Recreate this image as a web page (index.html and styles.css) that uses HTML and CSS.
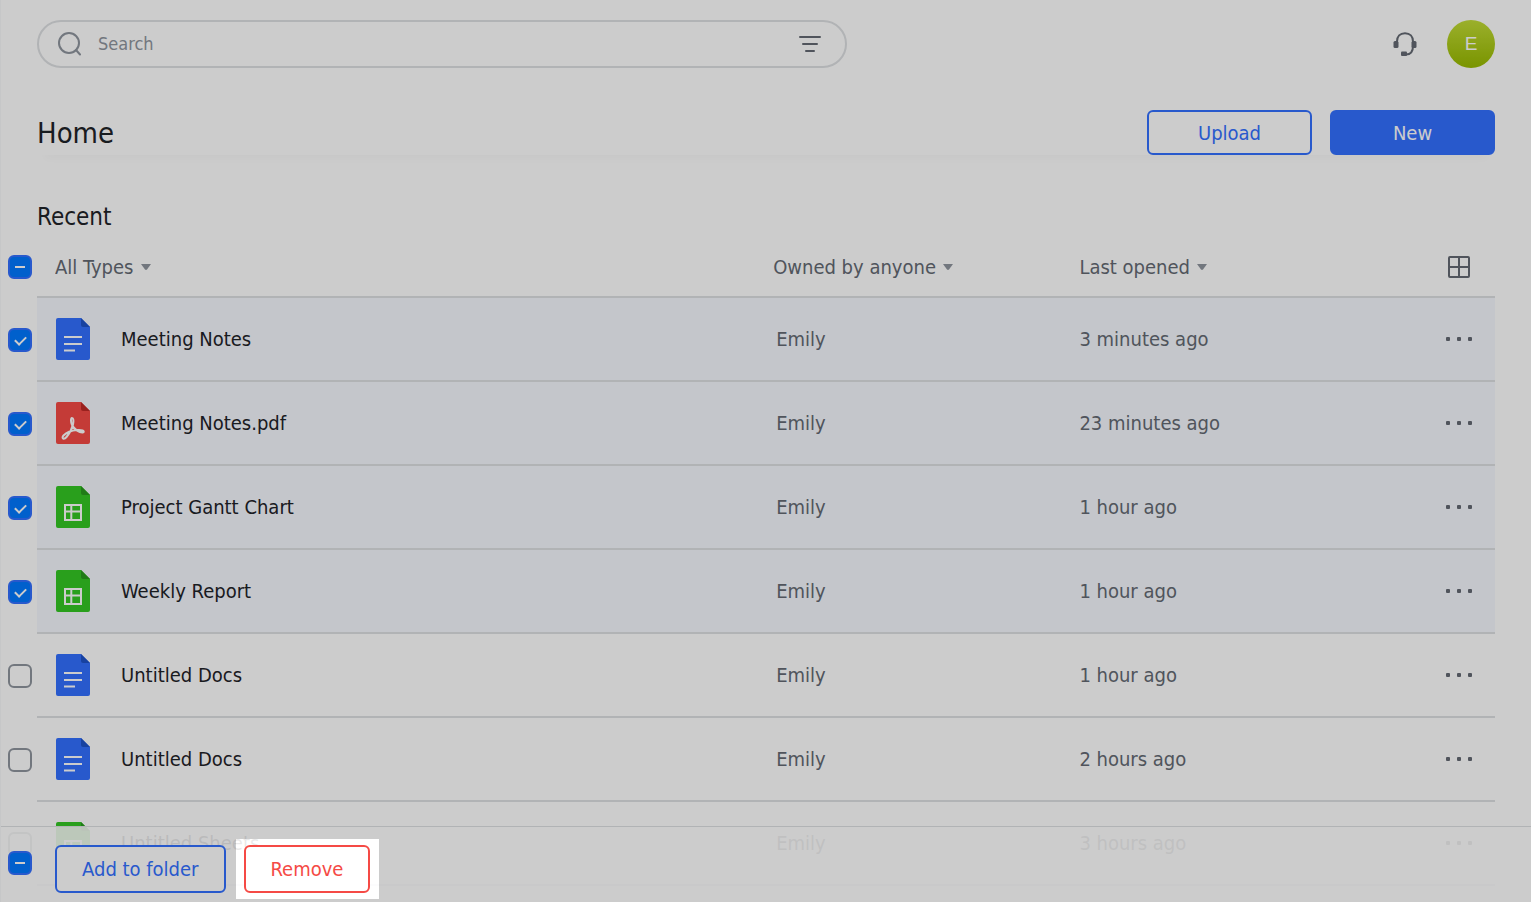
FILE: index.html
```html
<!DOCTYPE html>
<html lang="en">
<head>
<meta charset="utf-8">
<meta name="viewport" content="width=device-width, initial-scale=1">
<title>Home</title>
<link rel="stylesheet" href="styles.css">
</head>
<body>
<svg class="sprite" aria-hidden="true">
  <symbol id="doc" viewBox="0 0 34 42"><path fill="#3370ff" d="M2 0h23l9 9v31a2 2 0 0 1-2 2H2a2 2 0 0 1-2-2V2a2 2 0 0 1 2-2z"/><path fill="#1f53c9" d="M25 0l9 9h-7a2 2 0 0 1-2-2z"/><path fill="#fff" d="M8 18h18v2H8zM8 25h18v2H8zM8 31.500h11v2H8z"/></symbol>
  <symbol id="sheet" viewBox="0 0 34 42"><path fill="#34c724" d="M2 0h23l9 9v31a2 2 0 0 1-2 2H2a2 2 0 0 1-2-2V2a2 2 0 0 1 2-2z"/><path fill="#289a1d" d="M25 0l9 9h-7a2 2 0 0 1-2-2z"/><path fill="none" stroke="#fff" stroke-width="2" d="M9 19h16v15H9zM9 25.500h16M15.300 19v15"/></symbol>
  <symbol id="pdf" viewBox="0 0 34 42"><path fill="#f54a45" d="M2 0h23l9 9v31a2 2 0 0 1-2 2H2a2 2 0 0 1-2-2V2a2 2 0 0 1 2-2z"/><path fill="#c02a26" d="M25 0l9 9h-7a2 2 0 0 1-2-2z"/><path fill="none" stroke="#fff" stroke-width="2" stroke-linejoin="round" d="M16 16c-1.500 0-1.200 4.500 0 7 2.500 4.500 7.500 8 11 7.500 2.500-1.500-1.500-3-6-2.500-5.500.5-11 3-13.500 5.500-2.500 3 .5 4.500 3 1.500 3-3.500 5.500-8.500 6.500-12.500.8-3.500.5-6.500-1-6.500z"/></symbol>
  <symbol id="caret" viewBox="0 0 10 6"><path fill="#8f959e" d="M0 0h10L6 5.500Q5 6.400 4 5.500z"/></symbol>
  <symbol id="more" viewBox="0 0 26 4"><g fill="#646a73"><rect width="4" height="4" rx="1"/><rect x="11" width="4" height="4" rx="1"/><rect x="22" width="4" height="4" rx="1"/></g></symbol>
</svg>
<div class="page">
  <header class="topbar">
    <form class="search" role="search">
      <svg class="search-icon" viewBox="0 0 24 24" aria-hidden="true"><circle cx="12" cy="11" r="10"/><path d="M19 18l4 4.500"/></svg>
      <input class="search-input" type="search" placeholder="Search" aria-label="Search">
      <button class="icon-button" type="button" aria-label="Filter"><svg class="filter-icon" viewBox="0 0 22 18"><path d="M1 2h20M4 9h14M7 16h8"/></svg></button>
    </form>
    <div class="account">
      <button class="icon-button" type="button" aria-label="Support"><svg class="headset" viewBox="0 0 24 24"><path class="band" d="M4 11V9.500C4 4.500 7 1.200 12 1.200s8 3.300 8 8.300V14c0 5-2 8.500-7 8.500"/><rect x=".5" y="9" width="5" height="7" rx="1.500"/><rect x="18.500" y="9" width="5" height="7" rx="1.500"/><rect x="8" y="19.500" width="6" height="4.500" rx="1"/></svg></button>
      <button class="avatar" type="button">E</button>
    </div>
  </header>
  <section class="titlebar">
    <h1>Home</h1>
    <div class="actions">
      <button class="button outline wide" type="button">Upload</button>
      <button class="button primary wide" type="button">New</button>
    </div>
  </section>
  <main>
    <h2>Recent</h2>
    <table class="files">
      <colgroup><col class="col-check"><col><col class="col-owner"><col class="col-time"><col class="col-more"></colgroup>
      <thead>
        <tr>
          <th class="check"><input class="box mixed" type="checkbox" aria-label="Select all"></th>
          <th class="name"><label class="picker"><select aria-label="Type"><option>All Types</option></select><svg class="caret"><use href="#caret"/></svg></label></th>
          <th><label class="picker"><select aria-label="Owner"><option>Owned by anyone</option></select><svg class="caret"><use href="#caret"/></svg></label></th>
          <th><label class="picker"><select aria-label="Sort"><option>Last opened</option></select><svg class="caret"><use href="#caret"/></svg></label></th>
          <th class="more"><button class="icon-button" type="button" aria-label="Grid view"><svg class="grid-icon" viewBox="0 0 22 22"><rect x="1" y="1" width="20" height="20" rx="1"/><path d="M11 1v20M1 11h20"/></svg></button></th>
        </tr>
      </thead>
      <tbody>
        <tr class="selected"><td class="check"><input class="box" type="checkbox" checked aria-label="Select Meeting Notes"></td><td class="name"><div class="file"><svg class="file-icon"><use href="#doc"/></svg>Meeting Notes</div></td><td class="owner">Emily</td><td>3 minutes ago</td><td class="more"><button class="icon-button" type="button" aria-label="More"><svg class="dots"><use href="#more"/></svg></button></td></tr>
        <tr class="selected"><td class="check"><input class="box" type="checkbox" checked aria-label="Select Meeting Notes.pdf"></td><td class="name"><div class="file"><svg class="file-icon"><use href="#pdf"/></svg>Meeting Notes.pdf</div></td><td class="owner">Emily</td><td>23 minutes ago</td><td class="more"><button class="icon-button" type="button" aria-label="More"><svg class="dots"><use href="#more"/></svg></button></td></tr>
        <tr class="selected"><td class="check"><input class="box" type="checkbox" checked aria-label="Select Project Gantt Chart"></td><td class="name"><div class="file"><svg class="file-icon"><use href="#sheet"/></svg>Project Gantt Chart</div></td><td class="owner">Emily</td><td>1 hour ago</td><td class="more"><button class="icon-button" type="button" aria-label="More"><svg class="dots"><use href="#more"/></svg></button></td></tr>
        <tr class="selected"><td class="check"><input class="box" type="checkbox" checked aria-label="Select Weekly Report"></td><td class="name"><div class="file"><svg class="file-icon"><use href="#sheet"/></svg>Weekly Report</div></td><td class="owner">Emily</td><td>1 hour ago</td><td class="more"><button class="icon-button" type="button" aria-label="More"><svg class="dots"><use href="#more"/></svg></button></td></tr>
        <tr><td class="check"><input class="box" type="checkbox" aria-label="Select Untitled Docs"></td><td class="name"><div class="file"><svg class="file-icon"><use href="#doc"/></svg>Untitled Docs</div></td><td class="owner">Emily</td><td>1 hour ago</td><td class="more"><button class="icon-button" type="button" aria-label="More"><svg class="dots"><use href="#more"/></svg></button></td></tr>
        <tr><td class="check"><input class="box" type="checkbox" aria-label="Select Untitled Docs"></td><td class="name"><div class="file"><svg class="file-icon"><use href="#doc"/></svg>Untitled Docs</div></td><td class="owner">Emily</td><td>2 hours ago</td><td class="more"><button class="icon-button" type="button" aria-label="More"><svg class="dots"><use href="#more"/></svg></button></td></tr>
        <tr><td class="check"><input class="box" type="checkbox" aria-label="Select Untitled Sheets"></td><td class="name"><div class="file"><svg class="file-icon"><use href="#sheet"/></svg>Untitled Sheets</div></td><td class="owner">Emily</td><td>3 hours ago</td><td class="more"><button class="icon-button" type="button" aria-label="More"><svg class="dots"><use href="#more"/></svg></button></td></tr>
      </tbody>
    </table>
  </main>
  <footer class="bulkbar">
    <input class="box mixed" type="checkbox" aria-label="Selection">
    <button class="button outline" type="button">Add to folder</button>
    <div class="spotlight"><button class="button danger" type="button">Remove</button></div>
  </footer>
</div>
</body>
</html>
```
FILE: styles.css
```css
* { box-sizing: border-box; }
body {
  margin: 0;
  background: #fff;
  color: #1f2329;
  font-family: "DejaVu Sans Condensed", "Noto Sans", sans-serif;
  font-size: 20px;
  line-height: 28px;
}
button, input, select { font: inherit; color: inherit; margin: 0; }
svg { display: block; }
.sprite { display: none; }
.page {
  position: relative;
  height: 100vh;
  overflow: hidden;
  padding-left: 1px;
  background: linear-gradient(#f8f9fa, #f8f9fa) left / 1px 100% no-repeat;
}

.topbar { display: flex; justify-content: space-between; align-items: center; padding: 20px 36px 0; }
.search {
  display: flex;
  align-items: center;
  flex: 0 0 55.55%;
  height: 48px;
  padding: 0 24px 0 18px;
  border: 2px solid #dee0e3;
  border-radius: 24px;
}
.search-icon { width: 24px; height: 24px; fill: none; stroke: #8f959e; stroke-width: 2; stroke-linecap: round; }
.search-input { flex: 1; min-width: 0; padding: 0 0 0 17px; border: 0; outline: 0; background: none; font-size: 18px; }
.search-input::placeholder { color: #8f959e; opacity: 1; }
.icon-button { display: inline-flex; padding: 0; border: 0; background: none; }
.filter-icon { width: 22px; height: 18px; fill: none; stroke: #646a73; stroke-width: 2; stroke-linecap: round; }
.account { display: flex; align-items: center; gap: 30px; }
.headset { width: 24px; height: 24px; fill: #646a73; }
.headset .band { fill: none; stroke: #646a73; stroke-width: 2; }
.avatar {
  width: 48px;
  height: 48px;
  padding: 0;
  border: 0;
  border-radius: 50%;
  background: linear-gradient(#c2dc37, #98ba00);
  color: #fff;
  font-family: "Liberation Sans", sans-serif;
  font-size: 19px;
}

.titlebar {
  display: flex;
  justify-content: space-between;
  align-items: center;
  margin: 42px 36px 0;
  box-shadow: 0 12px 8px -8px rgba(31, 35, 41, 0.02);
}
h1, h2 { margin: 0; font-weight: 400; }
h1 { font-size: 29px; line-height: 44px; }
.actions { display: flex; gap: 18px; }
.button { height: 48px; padding: 0 25px; border: 2px solid; border-radius: 6px; background: #fff; }
.button.wide { width: 165px; height: 45px; }
.outline { color: #3370ff; }
.primary { background: #3370ff; border-color: #3370ff; color: #fff; }
.danger { color: #f54a45; }

h2 { padding: 47px 36px 6px; font-size: 24px; line-height: 30px; }
main { padding-right: 36px; }
.files { width: 100%; table-layout: fixed; border-spacing: 0; color: #646a73; }
.col-check { width: 36px; }
.col-owner { width: 20.5%; }
.col-time { width: 23%; }
.col-more { width: 72px; }
.files th { height: 60px; padding: 0; border-bottom: 2px solid #dee0e3; font-weight: 400; text-align: left; }
.files td { height: 84px; padding: 0; border-bottom: 2px solid #dee0e3; }
.files .check { border-bottom: 0; padding-left: 7px; }
.files th.check { padding-bottom: 2px; }
.files .name { padding-left: 18px; color: #1f2329; }
.files th.name { color: #646a73; }
.files .owner { padding-left: 3px; }
.files .more { text-align: center; line-height: 0; font-size: 0; }
.selected td:not(.check) { background: #f5f8fe; }
.picker { display: flex; align-items: center; gap: 7px; }
.picker select { appearance: none; padding: 0; border: 0; background: none; }
.caret { width: 10px; height: 6px; }
.file { display: flex; align-items: center; gap: 31px; padding-left: 1px; }
.file-icon { width: 34px; height: 42px; }
.dots { width: 26px; height: 4px; }
.grid-icon { width: 22px; height: 22px; fill: none; stroke: #646a73; stroke-width: 2; }

.box {
  appearance: none;
  display: grid;
  place-items: center;
  flex: none;
  width: 24px;
  height: 24px;
  border: 2px solid #8f959e;
  border-radius: 6px;
  background: #fff;
}
.box:checked, .mixed { border-color: #3370ff; background: #0078ff; }
.box:checked::before {
  content: "";
  width: 9px;
  height: 5px;
  border: solid #fff;
  border-width: 0 0 2px 2px;
  transform: translateY(-1px) rotate(-45deg);
}
.mixed::before { content: ""; width: 10px; height: 2px; background: #fff; }

.bulkbar {
  position: absolute;
  inset: auto 0 0 1px;
  display: flex;
  align-items: center;
  height: 76px;
  padding: 12px 7px 3px;
  border-top: 1px solid #dee0e3;
  background: rgba(255, 255, 255, 0.9);
}
.bulkbar .box { align-self: flex-start; margin: 12px 23px 0 0; }
/* Everything outside the highlighted action is dimmed by the spread shadow. */
.spotlight {
  position: relative;
  margin-left: 10px;
  padding: 6px 9px 6px 8px;
  box-shadow: 0 0 0 200vmax rgba(0, 0, 0, 0.2);
}
```
